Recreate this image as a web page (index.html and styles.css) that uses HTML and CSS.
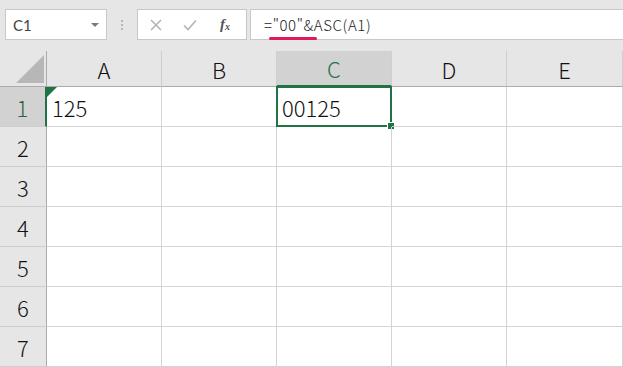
FILE: index.html
```html
<!DOCTYPE html>
<html lang="ja">
<head>
  <meta charset="UTF-8" />
  <meta name="viewport" content="width=device-width, initial-scale=1" />
  <title>Sheet</title>
  <link rel="stylesheet" href="styles.css">
</head>
<body>
  <div class="toolbar">
    <div class="name-box">
      <span>C1</span>
      <span class="drop"></span>
    </div>
    <div class="grip"><i></i><i></i><i></i></div>
    <div class="fx-box">
      <svg class="ico" width="14" height="14" viewBox="0 0 14 14"><path d="M2 2 L12 12 M12 2 L2 12" stroke="#b4b4b4" stroke-width="1.6" fill="none"/></svg>
      <svg class="ico" width="16" height="14" viewBox="0 0 16 14"><path d="M2 7.5 L6 11.5 L14 2.5" stroke="#b4b4b4" stroke-width="1.6" fill="none"/></svg>
      <span class="fx">f<sub>x</sub></span>
    </div>
    <div class="formula">
      <span class="ftext">="00"&amp;ASC(A1)</span>
      <span class="mark"></span>
    </div>
  </div>

  <div class="sheet">
    <div class="corner"><span class="tri"></span></div>
    <div class="col-head">A</div>
    <div class="col-head">B</div>
    <div class="col-head sel">C</div>
    <div class="col-head">D</div>
    <div class="col-head">E</div>

    <div class="row-head sel">1</div>
    <div class="cell flag">125</div>
    <div class="cell"></div>
    <div class="cell active">00125<span class="handle"></span></div>
    <div class="cell"></div>
    <div class="cell"></div>

    <div class="row-head">2</div>
    <div class="cell"></div><div class="cell"></div><div class="cell"></div><div class="cell"></div><div class="cell"></div>
    <div class="row-head">3</div>
    <div class="cell"></div><div class="cell"></div><div class="cell"></div><div class="cell"></div><div class="cell"></div>
    <div class="row-head">4</div>
    <div class="cell"></div><div class="cell"></div><div class="cell"></div><div class="cell"></div><div class="cell"></div>
    <div class="row-head">5</div>
    <div class="cell"></div><div class="cell"></div><div class="cell"></div><div class="cell"></div><div class="cell"></div>
    <div class="row-head">6</div>
    <div class="cell"></div><div class="cell"></div><div class="cell"></div><div class="cell"></div><div class="cell"></div>
    <div class="row-head">7</div>
    <div class="cell"></div><div class="cell"></div><div class="cell"></div><div class="cell"></div><div class="cell"></div>
  </div>
</body>
</html>
```

FILE: styles.css
```css
html, body {
  margin: 0;
  padding: 0;
  height: 100%;
  overflow: hidden;
  background: #e6e6e6;
  font-family: "Noto Sans CJK JP", "Noto Sans", sans-serif;
  color: #222;
}

.toolbar {
  height: 51px;
  box-sizing: border-box;
  padding: 9px 0 0 5px;
  display: flex;
  align-items: flex-start;
}

.name-box {
  width: 102px;
  height: 31px;
  box-sizing: border-box;
  background: #fff;
  border: 1px solid #c8c8c8;
  display: flex;
  align-items: center;
  justify-content: space-between;
  padding: 0 7px 0 7px;
  font-family: Lato, "Noto Sans", sans-serif;
  font-size: 15px;
  color: #444;
}

.drop {
  width: 0;
  height: 0;
  border-left: 4px solid transparent;
  border-right: 4px solid transparent;
  border-top: 4px solid #7a7a7a;
}

.grip {
  width: 30px;
  height: 31px;
  display: flex;
  flex-direction: column;
  align-items: center;
  justify-content: center;
  gap: 2px;
}

.grip i {
  width: 2px;
  height: 2px;
  background: #b4b4b4;
}

.fx-box {
  width: 110px;
  height: 31px;
  box-sizing: border-box;
  background: #fff;
  border: 1px solid #c8c8c8;
  display: flex;
  align-items: center;
  padding: 0 0 0 11px;
  gap: 19px;
}

.fx {
  font-family: "Liberation Serif", serif;
  font-style: italic;
  font-weight: bold;
  font-size: 15px;
  color: #555;
  margin-left: 3px;
}

.fx sub {
  font-size: 10px;
  vertical-align: -1px;
}

.formula {
  flex: 1;
  height: 31px;
  margin-left: 3px;
  box-sizing: border-box;
  background: #fff;
  border: 1px solid #c8c8c8;
  border-right: none;
  position: relative;
  padding: 4px 0 0 13px;
  font-size: 15px;
  font-weight: 300;
  letter-spacing: 0.6px;
  color: #222;
}

.mark {
  position: absolute;
  left: 18px;
  top: 27px;
  width: 48px;
  height: 3px;
  border-radius: 2px;
  background: #e0195a;
}

.sheet {
  display: grid;
  grid-template-columns: 47px 115px 115px 115px 115px 1fr;
  grid-template-rows: 36px repeat(7, 40px);
  background: #fff;
}

.corner {
  background: #e6e6e6;
  border-right: 1px solid #ababab;
  border-bottom: 1px solid #ababab;
  position: relative;
}

.tri {
  position: absolute;
  right: 2px;
  bottom: 3px;
  width: 0;
  height: 0;
  border-left: 28px solid transparent;
  border-bottom: 28px solid #b7b7b7;
}

.col-head {
  background: #e6e6e6;
  border-right: 1px solid #cfcfcf;
  border-bottom: 1px solid #ababab;
  display: flex;
  align-items: center;
  justify-content: center;
  font-size: 22px;
  font-weight: 300;
  color: #111;
}

.col-head.sel {
  background: #d2d2d2;
  color: #217346;
  border-bottom: 2px solid #217346;
}

.row-head {
  background: #e6e6e6;
  border-right: 1px solid #ababab;
  border-bottom: 1px solid #cfcfcf;
  display: flex;
  align-items: center;
  justify-content: center;
  font-size: 22px;
  font-weight: 300;
  color: #111;
}

.row-head.sel {
  background: #d2d2d2;
  color: #2d5e40;
  border-right: 2px solid #217346;
}

.cell {
  border-right: 1px solid #d4d4d4;
  border-bottom: 1px solid #d4d4d4;
  display: flex;
  align-items: center;
  padding-left: 5px;
  font-size: 22px;
  font-weight: 300;
  color: #111;
  position: relative;
}

.cell.flag::before {
  content: "";
  position: absolute;
  left: 0;
  top: 0;
  border-top: 10px solid #217346;
  border-right: 10px solid transparent;
}

.cell.active {
  margin: -1px 0 0 -1px;
  border: 2px solid #217346;
  padding-left: 4px;
}

.handle {
  position: absolute;
  right: -5px;
  bottom: -5px;
  width: 6px;
  height: 6px;
  background: #217346;
  border: 1px solid #fff;
}
```
